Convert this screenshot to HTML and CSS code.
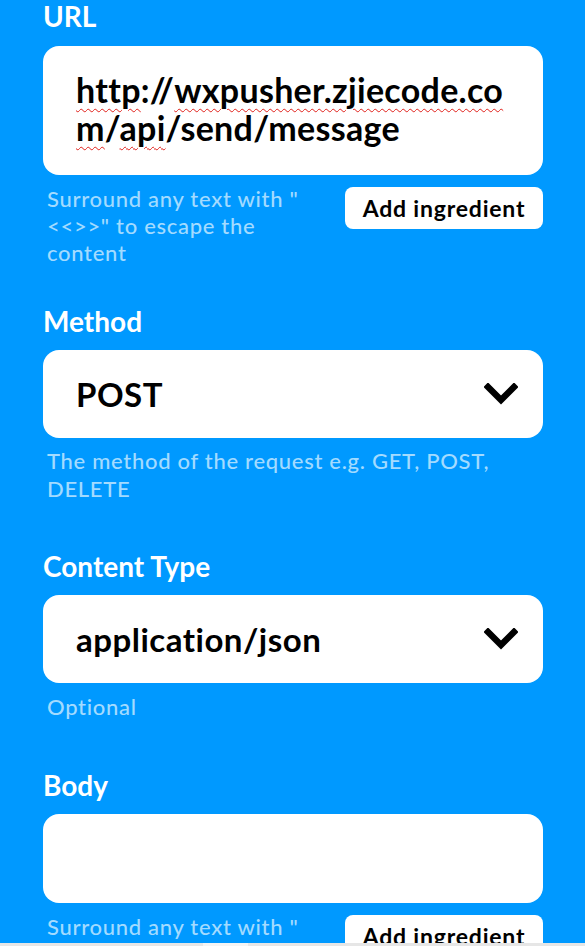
FILE: index.html
```html
<!DOCTYPE html>
<html lang="en">
<head>
<meta charset="utf-8">
<title>Make a web request</title>
<link rel="stylesheet" href="styles.css">
</head>
<body>
<main class="form">
  <section class="field field-url">
    <label class="field-label">URL</label>
    <div class="textbox textbox-url"><span class="spell">http</span>://<span class="spell">wxpusher.zjiecode.co</span><br><span class="spell">m</span>/<span class="spell">api</span>/send/message</div>
    <div class="helper-row">
      <p class="helper helper-narrow">Surround any text with "<wbr>&lt;&lt;&gt;&gt;" to escape the content</p>
      <button class="ingredient-btn" type="button">Add ingredient</button>
    </div>
  </section>

  <section class="field field-method">
    <label class="field-label">Method</label>
    <div class="select">
      <span class="select-value">POST</span>
      <svg class="chevron" width="34" height="22" viewBox="0 0 34 22" aria-hidden="true"><polyline points="4,4 17,17 30,4" fill="none" stroke="#000" stroke-width="6.5" stroke-linecap="square" stroke-linejoin="miter"/></svg>
    </div>
    <p class="helper">The method of the request e.g. GET, POST, DELETE</p>
  </section>

  <section class="field field-content">
    <label class="field-label">Content Type</label>
    <div class="select">
      <span class="select-value">application/json</span>
      <svg class="chevron" width="34" height="22" viewBox="0 0 34 22" aria-hidden="true"><polyline points="4,4 17,17 30,4" fill="none" stroke="#000" stroke-width="6.5" stroke-linecap="square" stroke-linejoin="miter"/></svg>
    </div>
    <p class="helper">Optional</p>
  </section>

  <section class="field field-body">
    <label class="field-label">Body</label>
    <div class="textbox textbox-body"></div>
    <div class="helper-row">
      <p class="helper helper-narrow">Surround any text with "<wbr>&lt;&lt;&gt;&gt;" to escape the content</p>
      <button class="ingredient-btn" type="button">Add ingredient</button>
    </div>
  </section>
</main>
<div class="hscroll"><div class="hscroll-thumb"></div></div>
</body>
</html>
```
FILE: styles.css
```css
html, body {
  margin: 0;
  padding: 0;
  background: #0099ff;
  overflow: hidden;
}
body {
  font-family: Lato, "Open Sans", "Liberation Sans", sans-serif;
  color: #fff;
  height: 946px;
}
.form {
  width: 500px;
  margin-left: 43px;
}
.field {
  display: flex;
  flex-direction: column;
}
.field-label {
  display: block;
  font-size: 28px;
  line-height: 32px;
  font-weight: 700;
  color: #fff;
  margin: 0 0 14px 0;
}
.field-method { margin-top: 39px; }
.field-content { margin-top: 47px; }
.field-body { margin-top: 49px; }
.field-method .field-label,
.field-content .field-label,
.field-body .field-label { margin-bottom: 13px; }

.textbox {
  background: #fff;
  border-radius: 16px;
  color: #000;
  box-sizing: border-box;
}
.textbox-url {
  height: 129px;
  padding: 25px 10px 0 33px;
  font-size: 34px;
  line-height: 38px;
  letter-spacing: 0.3px;
  font-weight: 700;
  white-space: nowrap;
}
.textbox-body {
  height: 89px;
}
.spell {
  text-decoration: underline wavy #e0201a;
  text-decoration-thickness: 1px;
  text-underline-offset: 5px;
}
.helper-row {
  display: flex;
  justify-content: space-between;
  align-items: flex-start;
  margin-top: 12px;
}
.helper {
  margin: 0;
  padding-left: 4px;
  font-size: 22px;
  line-height: 27px;
  letter-spacing: 0.7px;
  font-weight: 500;
  color: #a3dbff;
}
.field-method .helper { margin-top: 9px; line-height: 28px; }
.field-content .helper { margin-top: 10px; }
.helper-narrow {
  width: 270px;
  margin-top: -2px;
}
.ingredient-btn {
  flex: none;
  width: 198px;
  height: 42px;
  border: 0;
  border-radius: 8px;
  background: #fff;
  color: #000;
  font-family: inherit;
  font-size: 23px;
  letter-spacing: 0.8px;
  font-weight: 700;
  padding: 0;
}
.select {
  display: flex;
  align-items: center;
  justify-content: space-between;
  height: 88px;
  background: #fff;
  border-radius: 16px;
  padding: 0 25px 0 33px;
  box-sizing: border-box;
}
.select-value {
  color: #000;
  font-size: 33px;
  letter-spacing: 0.5px;
  font-weight: 700;
}
.chevron {
  display: block;
}
.hscroll {
  position: fixed;
  left: 0;
  right: 0;
  bottom: 0;
  height: 3px;
  background: #e6e6e6;
}
.hscroll-thumb {
  margin-left: 203px;
  width: 45px;
  height: 3px;
  background: #f4f4f4;
}
```
